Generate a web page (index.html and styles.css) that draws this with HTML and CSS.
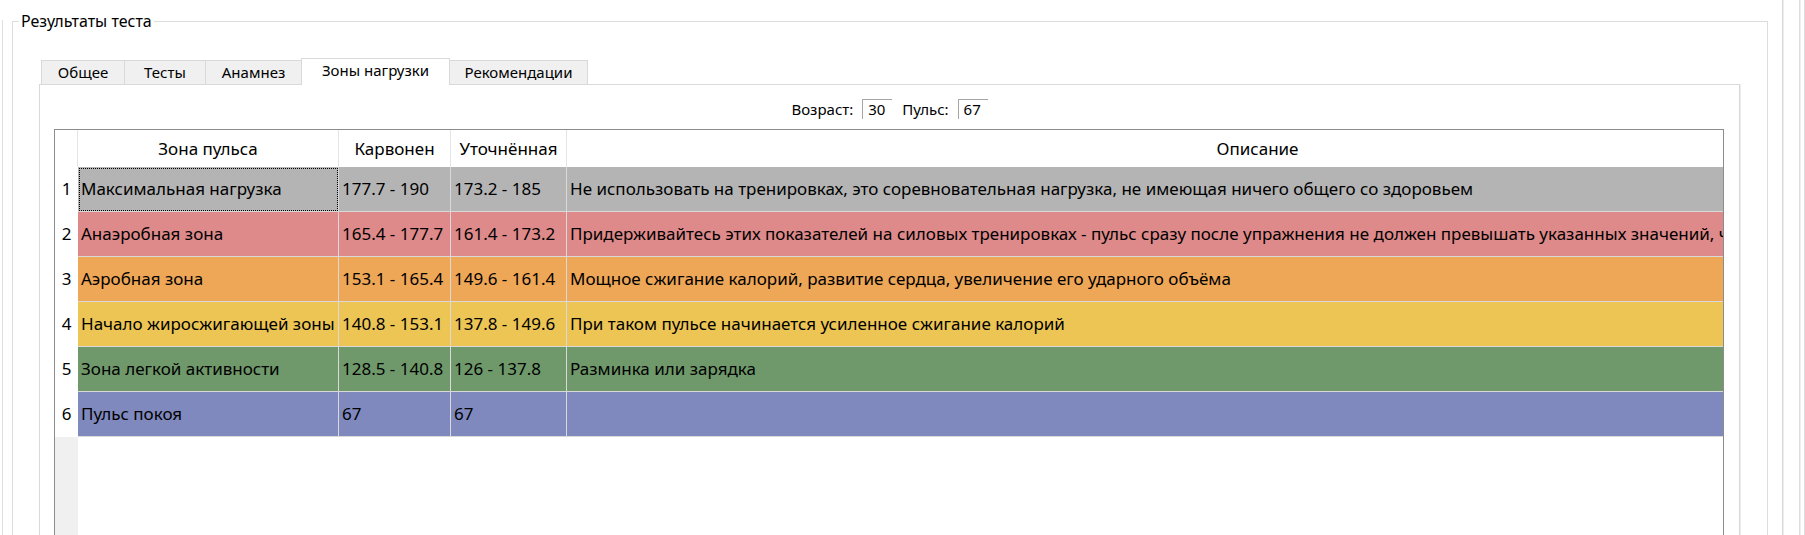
FILE: index.html
```html
<!DOCTYPE html>
<html lang="ru">
<head>
<meta charset="utf-8">
<title>Результаты теста</title>
<link rel="stylesheet" href="styles.css">
</head>
<body>
<div class="window">
  <div class="edge-left"></div>
  <fieldset class="group">
    <legend class="group-title">Результаты теста</legend>
    <div class="group-body">
      <div class="tabbar">
        <div class="tab tab-general">Общее</div>
        <div class="tab tab-tests">Тесты</div>
        <div class="tab tab-anamnesis">Анамнез</div>
        <div class="tab tab-zones is-active">Зоны нагрузки</div>
        <div class="tab tab-recs">Рекомендации</div>
      </div>
      <div class="pane">
        <div class="params">
          <span class="param-label">Возраст:</span><span class="param-value">30</span>
          <span class="param-label">Пульс:</span><span class="param-value">67</span>
        </div>
        <div class="grid">
          <div class="grid-head">
            <div class="corner"></div>
            <div class="hcell">Зона пульса</div>
            <div class="hcell">Карвонен</div>
            <div class="hcell">Уточнённая</div>
            <div class="hcell">Описание</div>
          </div>
          <div class="grid-row row-max">
            <div class="rowno">1</div>
            <div class="cell focus">Максимальная нагрузка</div>
            <div class="cell">177.7 - 190</div>
            <div class="cell">173.2 - 185</div>
            <div class="cell">Не использовать на тренировках, это соревновательная нагрузка, не имеющая ничего общего со здоровьем</div>
          </div>
          <div class="grid-row row-anaerobic">
            <div class="rowno">2</div>
            <div class="cell">Анаэробная зона</div>
            <div class="cell">165.4 - 177.7</div>
            <div class="cell">161.4 - 173.2</div>
            <div class="cell">Придерживайтесь этих показателей на силовых тренировках - пульс сразу после упражнения не должен превышать указанных значений, чтобы не перегружать сердце</div>
          </div>
          <div class="grid-row row-aerobic">
            <div class="rowno">3</div>
            <div class="cell">Аэробная зона</div>
            <div class="cell">153.1 - 165.4</div>
            <div class="cell">149.6 - 161.4</div>
            <div class="cell">Мощное сжигание калорий, развитие сердца, увеличение его ударного объёма</div>
          </div>
          <div class="grid-row row-fatburn">
            <div class="rowno">4</div>
            <div class="cell">Начало жиросжигающей зоны</div>
            <div class="cell">140.8 - 153.1</div>
            <div class="cell">137.8 - 149.6</div>
            <div class="cell">При таком пульсе начинается усиленное сжигание калорий</div>
          </div>
          <div class="grid-row row-light">
            <div class="rowno">5</div>
            <div class="cell">Зона легкой активности</div>
            <div class="cell">128.5 - 140.8</div>
            <div class="cell">126 - 137.8</div>
            <div class="cell">Разминка или зарядка</div>
          </div>
          <div class="grid-row row-rest">
            <div class="rowno">6</div>
            <div class="cell">Пульс покоя</div>
            <div class="cell">67</div>
            <div class="cell">67</div>
            <div class="cell"></div>
          </div>
          <div class="grid-filler"><div class="filler-stub"></div></div>
        </div>
      </div>
    </div>
  </fieldset>
  <div class="edge-right edge-r1"></div>
  <div class="edge-right edge-r2"></div>
  <div class="edge-right edge-r3"></div>
</div>
</body>
</html>
```
FILE: styles.css
```css
html, body {
  margin: 0;
  padding: 0;
  background: #ffffff;
}
body {
  font-family: "Noto Sans", "Open Sans", sans-serif;
  font-size: 17px;
  color: #000000;
}
.window {
  display: flex;
  align-items: flex-start;
  width: 1805px;
  height: 535px;
  overflow: hidden;
  background: #ffffff;
}
.edge-left {
  flex: none;
  width: 2px;
  height: 600px;
  margin-top: 20px;
  border-right: 1px solid #dedede;
}
.group {
  flex: none;
  box-sizing: border-box;
  width: 1756px;
  min-width: 0;
  margin: 11px 0 0 9px;
  padding: 0;
  border: 1px solid #dcdcdc;
  border-bottom: none;
}
.group-title {
  margin-left: 6px;
  padding: 0 2px;
  height: 21px;
  line-height: 21px;
  font-size: 16px;
}
.group-body {
  padding: 26px 27px 0 26px;
}
.tabbar {
  display: flex;
  align-items: flex-end;
  height: 26px;
  margin-left: 2px;
  font-size: 15px;
}
.tab {
  box-sizing: border-box;
  flex: none;
  height: 24px;
  line-height: 23px;
  margin-right: -1px;
  text-align: center;
  background: #f0f0f0;
  border: 1px solid #d9d9d9;
  border-bottom: none;
  white-space: nowrap;
}
.tab-general { width: 84px; }
.tab-tests { width: 82px; }
.tab-anamnesis { width: 97px; }
.tab-zones { width: 149px; }
.tab-recs { width: 139px; }
.tab.is-active {
  position: relative;
  z-index: 1;
  height: 27px;
  margin-bottom: -1px;
  line-height: 22px;
  padding-bottom: 4px;
  background: #ffffff;
}
.pane {
  background: #ffffff;
  border: 1px solid #d9d9d9;
  border-bottom: none;
  box-shadow: 1px 0 0 #ebebeb;
}
.params {
  display: flex;
  justify-content: center;
  align-items: center;
  margin-top: 14px;
  height: 20px;
  font-size: 15px;
}
.param-label {
  line-height: 20px;
  margin-right: 9px;
}
.param-value + .param-label {
  margin-left: 10px;
}
.param-value {
  box-sizing: border-box;
  width: 30px;
  height: 20px;
  line-height: 19px;
  padding-left: 5px;
  border-top: 1px solid #a5a5a5;
  border-left: 1px solid #a5a5a5;
}
.grid {
  display: flex;
  flex-direction: column;
  height: 440px;
  margin: 10px 15px 0 14px;
  border: 1px solid #8c8c8c;
  overflow: hidden;
  background: #ffffff;
}
.grid-head,
.grid-row {
  display: grid;
  grid-template-columns: 23px 261px 112px 116px 1382px;
  flex: none;
}
.grid-head {
  height: 37px;
}
.corner,
.hcell {
  box-sizing: border-box;
  height: 37px;
  line-height: 37px;
  border-right: 1px solid #e5e5e5;
  text-align: center;
  white-space: nowrap;
  overflow: hidden;
}
.rowno {
  height: 45px;
  line-height: 44px;
  text-align: center;
  background: #ffffff;
}
.cell {
  box-sizing: border-box;
  height: 45px;
  line-height: 44px;
  padding-left: 3px;
  border-right: 1px solid #d9d9d9;
  border-bottom: 1px solid #d9d9d9;
  white-space: nowrap;
  overflow: hidden;
}
.cell.focus {
  outline: 1px dotted #000000;
  outline-offset: -2px;
}
.row-max .cell { background: #b4b4b4; }
.row-anaerobic .cell { background: #de8a8a; }
.row-aerobic .cell { background: #eea657; }
.row-fatburn .cell { background: #ecc555; }
.row-light .cell { background: #6f996b; }
.row-rest .cell { background: #7f89bd; }
.grid-filler {
  flex: 1;
  display: flex;
}
.filler-stub {
  width: 23px;
  background: #f0f0f0;
}
.edge-right {
  flex: none;
  height: 600px;
}
.edge-r1 {
  width: 0;
  margin-left: 14px;
  border-left: 1px solid #d8d8d8;
  border-right: 1px solid #ececec;
}
.edge-r2 {
  width: 0;
  margin-left: 15px;
  border-left: 1px solid #dcdcdc;
  border-right: 1px solid #efefef;
}
.edge-r3 {
  width: 0;
  margin-left: 3px;
  border-left: 1px solid #dcdcdc;
}
```
